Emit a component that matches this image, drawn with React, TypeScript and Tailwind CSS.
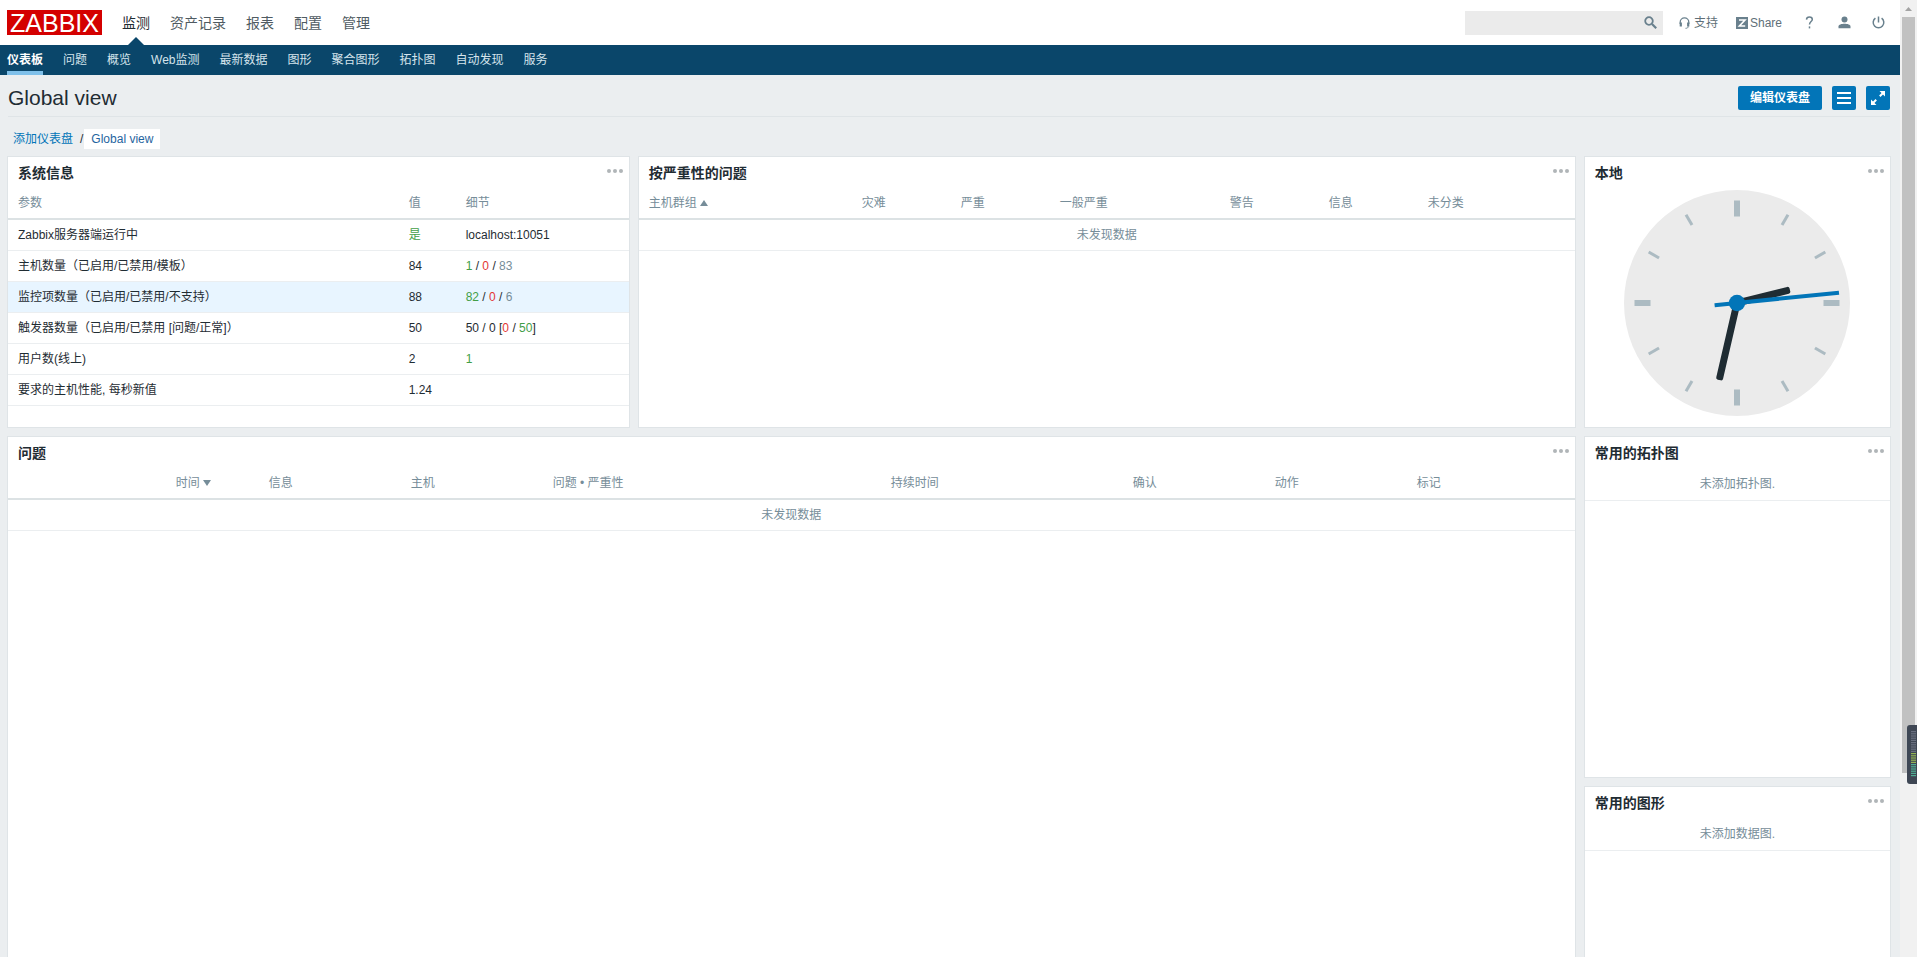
import type { ReactNode } from 'react';
import clsx from 'clsx';

const topMenu = ['监测', '资产记录', '报表', '配置', '管理'];

const subMenu = [
  '仪表板',
  '问题',
  '概览',
  'Web监测',
  '最新数据',
  '图形',
  '聚合图形',
  '拓扑图',
  '自动发现',
  '服务',
];

const green = 'text-[#429e47]';
const red = 'text-[#e33734]';
const grey = 'text-[#768d99]';

const systemInfo: { name: string; value: ReactNode; details?: ReactNode; hover?: boolean }[] = [
  { name: 'Zabbix服务器端运行中', value: <span className={green}>是</span>, details: 'localhost:10051' },
  {
    name: '主机数量（已启用/已禁用/模板）',
    value: '84',
    details: (
      <>
        <span className={green}>1</span> / <span className={red}>0</span> / <span className={grey}>83</span>
      </>
    ),
  },
  {
    name: '监控项数量（已启用/已禁用/不支持）',
    value: '88',
    hover: true,
    details: (
      <>
        <span className={green}>82</span> / <span className={red}>0</span> / <span className={grey}>6</span>
      </>
    ),
  },
  {
    name: '触发器数量（已启用/已禁用 [问题/正常]）',
    value: '50',
    details: (
      <>
        50 / 0 [<span className={red}>0</span> / <span className={green}>50</span>]
      </>
    ),
  },
  { name: '用户数(线上)', value: '2', details: <span className={green}>1</span> },
  { name: '要求的主机性能, 每秒新值', value: '1.24' },
];

const severities = [
  { label: '灾难', width: 'w-[99px]' },
  { label: '严重', width: 'w-[99px]' },
  { label: '一般严重', width: 'w-[170px]' },
  { label: '警告', width: 'w-[99px]' },
  { label: '信息', width: 'w-[99px]' },
  { label: '未分类', width: 'w-[152px]' },
];

const problemColumns = [
  { label: '信息', width: 'w-[142px]' },
  { label: '主机', width: 'w-[142px]' },
  { label: '问题 • 严重性', width: 'w-[338px]' },
  { label: '持续时间', width: 'w-[242px]' },
  { label: '确认', width: 'w-[142px]' },
  { label: '动作', width: 'w-[142px]' },
  { label: '标记', width: 'w-[163px]' },
];

function Widget({ title, className, children }: { title: string; className: string; children: ReactNode }) {
  return (
    <section className={clsx('flex flex-col bg-white shadow-[0_0_0_1px_#dfe4e7] overflow-hidden', className)}>
      <header className="flex justify-between h-[30px] shrink-0 pl-[10px] pr-[6px]">
        <h4 className="pt-[6px] text-sm leading-5 font-bold">{title}</h4>
        <button aria-label="更多" className="flex gap-[2px] pt-3 h-4">
          <i className="size-1 rounded-full bg-[#b0b5b8]" />
          <i className="size-1 rounded-full bg-[#b0b5b8]" />
          <i className="size-1 rounded-full bg-[#b0b5b8]" />
        </button>
      </header>
      {children}
    </section>
  );
}

function Th({ className, children }: { className?: string; children?: ReactNode }) {
  return (
    <th className={clsx('h-8 px-[5px] border-b-2 border-[#dce2e4] text-left font-normal text-[#768d99]', className)}>
      {children}
    </th>
  );
}

function EmptyRow({ colSpan, children }: { colSpan: number; children: ReactNode }) {
  return (
    <tr>
      <td colSpan={colSpan} className="h-[31px] border-b border-[#ebeef0] text-center text-[#768d99]">
        {children}
      </td>
    </tr>
  );
}

function Clock() {
  const ticks = Array.from({ length: 12 }, (_, i) => i);
  return (
    <svg viewBox="-113 -113 226 226" className="size-[226px] mx-auto mt-[3px]" role="img" aria-label="02:32:14">
      <circle r="113" fill="#ebebeb" />
      {ticks.map((i) =>
        i % 3 === 0 ? (
          <rect key={i} x="-3" y="-102.5" width="6" height="16" fill="#acbbc2" transform={`rotate(${i * 30})`} />
        ) : (
          <rect key={i} x="-1.5" y="-102" width="3" height="12" fill="#acbbc2" transform={`rotate(${i * 30})`} />
        ),
      )}
      <rect x="-3.5" y="-54.5" width="7" height="55" rx="2" fill="#1f2c33" transform="rotate(76)" />
      <rect x="-3.5" y="-79" width="7" height="79" rx="2" fill="#1f2c33" transform="rotate(193)" />
      <rect x="-2" y="-102.5" width="4" height="125" fill="#0275b8" transform="rotate(84.2)" />
      <circle r="8.2" fill="#0275b8" />
    </svg>
  );
}

function Header() {
  return (
    <header>
      <div className="flex items-center h-[45px] pl-[7px] pr-[15px] bg-white">
        <a href="#" aria-label="ZABBIX" className="block w-[95px] h-[25px] bg-[#d40000]">
          <svg viewBox="0 0 95 25" className="w-full h-full">
            <text x="47.5" y="21.5" textAnchor="middle" fontSize="25" fill="#fff" fontFamily="Liberation Sans, sans-serif">
              ZABBIX
            </text>
          </svg>
        </a>
        <nav className="flex gap-5 h-full ml-5 text-sm">
          {topMenu.map((item, i) => (
            <a
              key={item}
              href="#"
              className={clsx('relative flex items-center', i === 0 ? 'text-[#1f2c33]' : 'text-[#4f5b62]')}
            >
              {item}
              {i === 0 && (
                <svg viewBox="0 0 16 8" className="absolute bottom-0 left-1/2 -translate-x-1/2 w-4 h-2">
                  <path d="M0 8L8 0l8 8z" fill="#0a466a" />
                </svg>
              )}
            </a>
          ))}
        </nav>
        <div className="flex items-center ml-auto text-[#5f6f78]">
          <div className="flex items-center w-[198px] h-6 pr-[6px] bg-[#ebebeb]">
            <input type="text" aria-label="搜索" className="flex-1 min-w-0 h-full px-1 outline-none" />
            <button aria-label="搜索">
              <svg viewBox="0 0 13 13" className="size-[13px]" fill="none" stroke="#69808d" strokeWidth="1.8">
                <circle cx="5" cy="5" r="3.8" />
                <path d="M8 8l4.2 4.2" strokeWidth="2.2" />
              </svg>
            </button>
          </div>
          <a href="#" className="flex items-center gap-1 ml-4">
            <svg viewBox="0 0 11 12" className="w-[11px] h-3" fill="none" stroke="#69808d">
              <path d="M1.2 7V5.2a4.3 4.3 0 0 1 8.6 0V7" strokeWidth="1.3" />
              <path d="M1.8 5.5v4M9.2 5.5v4" strokeWidth="2.2" />
              <path d="M9.2 9.5c0 1.3-1 1.8-2.7 1.8" />
            </svg>
            支持
          </a>
          <a href="#" className="flex items-center gap-[2px] ml-[18px]">
            <svg viewBox="0 0 12 12" className="size-3">
              <path d="M0 0h12v12H0z" fill="#69808d" />
              <path d="M3 3h6L3.4 9H9.2" fill="none" stroke="#fff" strokeWidth="1.6" />
            </svg>
            Share
          </a>
          <a href="#" aria-label="帮助" className="ml-[23px] w-[9px]">
            <svg viewBox="0 0 9 13" className="w-[9px] h-[13px]" fill="none" stroke="#69808d" strokeWidth="1.5">
              <path d="M1.5 3.6C1.6 1.9 2.8 1 4.4 1s2.900.9 2.900 2.500c0 2-2.800 2.200-2.800 4.900" />
              <path d="M4.5 10.4v2" />
            </svg>
          </a>
          <a href="#" aria-label="用户" className="ml-6">
            <svg viewBox="0 0 13 13" className="size-[13px]" fill="#69808d">
              <circle cx="6.5" cy="3.4" r="3" />
              <path d="M.5 12.2V10.6C.5 8.6 3.6 7.8 6.5 7.8s6 .8 6 2.8v1.6z" />
            </svg>
          </a>
          <a href="#" aria-label="退出" className="ml-[21px]">
            <svg viewBox="0 0 13 13" className="size-[13px]" fill="none" stroke="#69808d" strokeWidth="1.5">
              <path d="M3.4 2.2a5.3 5.3 0 1 0 6.2 0" />
              <path d="M6.5.5v6" />
            </svg>
          </a>
        </div>
      </div>
      <nav className="flex gap-5 h-[30px] pl-[7px] bg-[#0a466a] text-[#d5e4ec]">
        {subMenu.map((item, i) => (
          <a
            key={item}
            href="#"
            className={clsx(
              'flex items-center border-b-4 pt-1',
              i === 0 ? 'border-[#7fc0ea] font-bold text-white' : 'border-transparent',
            )}
          >
            {item}
          </a>
        ))}
      </nav>
    </header>
  );
}

function Scrollbar() {
  return (
    <div className="relative flex flex-col items-center w-[17px] shrink-0 h-full bg-[#f1f1f1]">
      <svg viewBox="0 0 17 17" className="size-[17px] shrink-0">
        <path d="M5 11l3.5-4 3.5 4z" fill="#a3a3a3" />
      </svg>
      <div className="w-[13px] h-[79%] bg-[#c1c1c1]" />
      {/* desktop monitor gadget docked over the scrollbar */}
      <svg viewBox="0 0 10 59" className="absolute right-0 top-[725px] w-[10px] h-[59px]">
        <path d="M3 0h7v59H3a3 3 0 0 1-3-3V3a3 3 0 0 1 3-3z" fill="#3f4754" />
        {Array.from({ length: 21 }, (_, i) => (
          <rect
            key={i}
            x="4"
            y={6 + i * 2.2}
            width="5"
            height="1.2"
            fill={i < 10 ? '#6a7080' : i < 15 ? '#93b455' : '#4fae93'}
          />
        ))}
      </svg>
    </div>
  );
}

export default function App() {
  return (
    <div className="flex h-screen overflow-hidden bg-[#ebeef0] text-xs text-[#1f2c33] font-['Liberation_Sans','Noto_Sans_CJK_SC',sans-serif]">
      <div className="flex-1 min-w-0 h-full overflow-hidden">
        <Header />

        <main className="pl-2 pr-[10px]">
          <div className="flex items-center justify-between h-[42px] pt-1 border-b border-[#dfe4e7]">
            <h1 className="text-[21px] leading-6">Global view</h1>
            <div className="flex gap-[10px]">
              <button className="w-[84px] h-6 rounded-[2px] bg-[#0275b8] font-bold text-white">编辑仪表盘</button>
              <button aria-label="菜单" className="flex items-center justify-center size-6 rounded-[2px] bg-[#0275b8]">
                <svg viewBox="0 0 14 12" className="w-[14px] h-3" fill="#fff">
                  <path d="M0 0h14v2H0zM0 5h14v2H0zM0 10h14v2H0z" />
                </svg>
              </button>
              <button aria-label="全屏" className="flex items-center justify-center size-6 rounded-[2px] bg-[#0275b8]">
                <svg viewBox="0 0 14 14" className="size-[14px]" fill="#fff" stroke="#fff" strokeWidth="2">
                  <path d="M8.8 5.2L12 2M5.2 8.8L2 12" />
                  <path d="M8.5 0H14v5.5zM0 8.5V14h5.5z" stroke="none" />
                </svg>
              </button>
            </div>
          </div>

          <div className="flex items-center h-5 mt-3 mb-2 pl-[5px] text-[#1f65a0]">
            <a href="#" className="text-[#0275b8]">
              添加仪表盘
            </a>
            <span className="ml-[7px] mr-[1px] text-[#1f2c33]">/</span>
            <a href="#" className="h-5 px-[7px] leading-5 bg-white">
              Global view
            </a>
          </div>

          <div className="grid grid-cols-12 auto-rows-[60px] gap-[10px]">
            <Widget title="系统信息" className="col-span-4 row-span-4">
              <table className="w-full table-fixed">
                <thead>
                  <tr>
                    <Th className="pl-[10px]">参数</Th>
                    <Th className="w-[57px]">值</Th>
                    <Th className="w-[168px]">细节</Th>
                  </tr>
                </thead>
                <tbody>
                  {systemInfo.map((row) => (
                    <tr key={row.name} className={clsx('border-b border-[#ebeef0]', row.hover && 'bg-[#e8f5ff]')}>
                      <td className="h-[31px] pl-[10px]">{row.name}</td>
                      <td className="px-[5px]">{row.value}</td>
                      <td className="px-[5px]">{row.details}</td>
                    </tr>
                  ))}
                </tbody>
              </table>
            </Widget>

            <Widget title="按严重性的问题" className="col-span-6 row-span-4">
              <table className="w-full table-fixed">
                <thead>
                  <tr>
                    <Th className="pl-[10px]">
                      主机群组
                      <svg viewBox="0 0 8 6" className="inline-block ml-[3px] w-2 h-[6px]">
                        <path d="M0 6l4-6 4 6z" fill="#768d99" />
                      </svg>
                    </Th>
                    {severities.map((col) => (
                      <Th key={col.label} className={col.width}>
                        {col.label}
                      </Th>
                    ))}
                  </tr>
                </thead>
                <tbody>
                  <EmptyRow colSpan={7}>未发现数据</EmptyRow>
                </tbody>
              </table>
            </Widget>

            <Widget title="本地" className="col-span-2 row-span-4">
              <Clock />
            </Widget>

            <Widget title="问题" className="col-span-10 row-span-10">
              <table className="w-full table-fixed">
                <thead>
                  <tr>
                    <Th className="text-right">
                      时间
                      <svg viewBox="0 0 8 6" className="inline-block ml-[3px] w-2 h-[6px]">
                        <path d="M0 0h8L4 6z" fill="#768d99" />
                      </svg>
                    </Th>
                    <Th className="w-12" />
                    {problemColumns.map((col) => (
                      <Th key={col.label} className={col.width}>
                        {col.label}
                      </Th>
                    ))}
                  </tr>
                </thead>
                <tbody>
                  <EmptyRow colSpan={9}>未发现数据</EmptyRow>
                </tbody>
              </table>
            </Widget>

            <Widget title="常用的拓扑图" className="col-span-2 row-span-5">
              <p className="h-[34px] leading-[34px] border-b border-[#ebeef0] text-center text-[#768d99]">
                未添加拓扑图.
              </p>
            </Widget>

            <Widget title="常用的图形" className="col-span-2 row-span-5">
              <p className="h-[34px] leading-[34px] border-b border-[#ebeef0] text-center text-[#768d99]">
                未添加数据图.
              </p>
            </Widget>
          </div>
        </main>
      </div>
      <Scrollbar />
    </div>
  );
}
